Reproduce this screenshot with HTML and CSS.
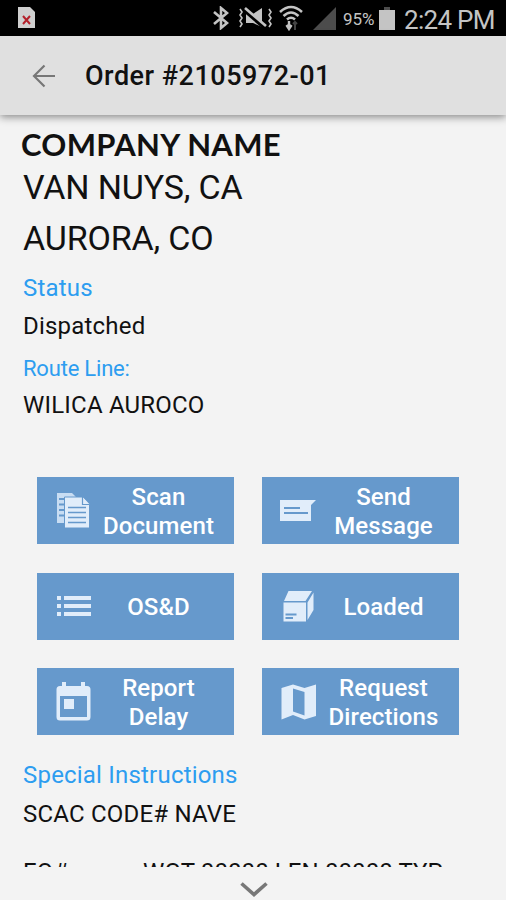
FILE: index.html
```
<!DOCTYPE html>
<html lang="en">

<head>
  <meta charset="UTF-8">
  <meta name="viewport" content="width=device-width, initial-scale=1.0">
  <title>Order #2105972-01</title>
  <link rel="stylesheet" href="styles.css">
</head>

<body>
  <div class="statusbar">
    <svg class="sim" width="18" height="22" viewBox="0 0 18 22">
      <path d="M0 0h12l5 5v16H0z" fill="#cfcfcf" />
      <path d="M5 9l7 8M12 9l-7 8" stroke="#b3202a" stroke-width="2" />
    </svg>
    <svg width="16" height="24" viewBox="0 0 16 24" fill="none" stroke="#c4c4c4" stroke-width="2.6">
      <path d="M1 6l13 11-6 5V2l6 5L1 18" />
    </svg>
    <svg class="mute" width="34" height="22" viewBox="0 0 34 22">
      <path d="M8 7h7l9-6v19l-9-4H8z" fill="#c4c4c4" />
      <path d="M5 2L27 21" stroke="#000" stroke-width="4" />
      <path d="M7 1L28 19" stroke="#c4c4c4" stroke-width="2.6" />
      <path d="M2 2l2 3-2 3 2 3-2 3 2 3-2 3M31 2l2 3-2 3 2 3-2 3 2 3-2 3" fill="none" stroke="#c4c4c4" stroke-width="1.6" />
    </svg>
    <svg class="wifi" width="24" height="26" viewBox="0 0 24 26" fill="none" stroke="#c4c4c4" stroke-width="2.6">
      <path d="M1 7Q12-3 23 7M4.500 11Q12 4 19.500 11M8 14.500Q12 11 16 14.500" />
      <path d="M10 16v8M7.500 20l2.500 4 2.500-4" stroke-width="2.400" />
      <path d="M16 25v-8M14 19l2-2 2 2" stroke="#444" stroke-width="2" />
    </svg>
    <svg class="signal" width="23" height="23" viewBox="0 0 23 23">
      <path d="M23 0v23H0z" fill="#4c4c4c" />
    </svg>
    <span class="percent">95%</span>
    <svg class="battery" width="16" height="23" viewBox="0 0 16 23">
      <path d="M5 0h6v4H5z" fill="#4c4c4c" />
      <path d="M0 3h16v20H0z" fill="#c4c4c4" />
    </svg>
    <span class="time">2:24 PM</span>
  </div>

  <header class="toolbar">
    <svg class="back" width="24" height="24" viewBox="0 0 24 24" fill="none" stroke="#777" stroke-width="2.2">
      <path d="M23 12H2M12.500 1.500L2 12l10.500 10.500" />
    </svg>
    <h1>Order #2105972-01</h1>
  </header>

  <main class="order">
    <p class="company">COMPANY NAME</p>
    <p class="place from">VAN NUYS, CA</p>
    <p class="place to">AURORA, CO</p>
    <p class="label status">Status</p>
    <p class="value">Dispatched</p>
    <p class="label route">Route Line:</p>
    <p class="value line">WILICA AUROCO</p>

    <div class="actions">
      <button type="button">
        <svg width="36" height="38" viewBox="0 0 36 38">
          <path d="M2 1h15l6 6v24H2z" fill="#c8ddf3" />
          <path d="M4 7h6M4 12.500h6M4 18h6M4 23.500h6" stroke="#6699cc" stroke-width="1.800" />
          <path d="M9.500 5H28l6.500 7v24h-25z" fill="#e1edfa" stroke="#6699cc" stroke-width="1" />
          <path d="M27.500 5v7.500h7" fill="#e1edfa" stroke="#6699cc" stroke-width="1.200" />
          <path d="M13 15.500h18M13 20.500h18M13 25.500h18M13 30.500h18" stroke="#6699cc" stroke-width="1.600" />
        </svg>
        <span>Scan<br>Document</span>
      </button>
      <button type="button">
        <svg width="36" height="38" viewBox="0 0 36 38">
          <path d="M0 8h36l-5 5v16H0z" fill="#e1edfa" />
          <path d="M4 16h16M4 21h24" stroke="#6699cc" stroke-width="2.200" />
        </svg>
        <span>Send<br>Message</span>
      </button>
      <button type="button">
        <svg width="36" height="38" viewBox="0 0 36 38" fill="#e1edfa">
          <path d="M2 9h4v4H2zM2 17h4v4H2zM2 25h4v4H2zM9 9h27v4H9zM9 17h27v4H9zM9 25h27v4H9z" />
        </svg>
        <span>OS&amp;D</span>
      </button>
      <button type="button">
        <svg width="36" height="38" viewBox="0 0 36 38" fill="#e1edfa">
          <path d="M8.500 4H32l-6.500 10H4zM33.500 5.500V23l-6 10V15.500zM3.500 15.500h22.500V34.500H3.500z" />
          <path d="M5.500 27.500h11M5.500 31h7.500" stroke="#6699cc" stroke-width="1.800" />
        </svg>
        <span>Loaded</span>
      </button>
      <button type="button">
        <svg width="36" height="40" viewBox="0 0 36 40" fill="#e1edfa">
          <path d="M7 0h4v4h15V0h4v4h2q3.500 0 3.500 3.500V35q0 3.500-3.500 3.500H5Q1.500 38.500 1.500 35V7.500Q1.500 4 5 4h2zM5 14v21h27V14z" fill-rule="evenodd" />
          <path d="M9 17h10v10H9z" />
        </svg>
        <span>Report<br>Delay</span>
      </button>
      <button type="button">
        <svg width="36" height="38" viewBox="0 0 36 38" fill="#e1edfa">
          <path d="M1.500 5L13 1.500 24.500 5 36 1.500V33l-11.500 3.500L13 32 1.500 36.500zM13 5.500v23l11.500 4V9z" fill-rule="evenodd" />
        </svg>
        <span>Request<br>Directions</span>
      </button>
    </div>

    <p class="label special">Special Instructions</p>
    <p class="value scac">SCAC CODE# NAVE</p>
    <p class="value cargo"><span class="eq">EQ#</span><span class="load">WGT 00000 LEN 00000 TYP</span></p>
  </main>

  <footer class="more">
    <svg width="28" height="16" viewBox="0 0 28 16" fill="none" stroke="#777" stroke-width="3.600">
      <path d="M1.500 1.500L14 12.500 26.500 1.500" />
    </svg>
  </footer>
</body>

</html>
```
FILE: styles.css
```
* {
  box-sizing: border-box;
}

body {
  display: flex;
  flex-direction: column;
  height: 900px;
  margin: 0;
  overflow: hidden;
  background-color: #f3f3f3;
  color: #111;
  font-family: Roboto, "Liberation Sans", sans-serif;
}

h1,
p {
  margin: 0;
  white-space: nowrap;
}

svg {
  display: block;
  flex-shrink: 0;
}

/* phone status bar */
.statusbar {
  display: flex;
  align-items: center;
  flex-shrink: 0;
  height: 36px;
  padding-left: 18px;
  background-color: #000;
  color: #c4c4c4;
}

.sim {
  margin-right: 177px;
}

.mute {
  margin-left: 9px;
}

.wifi {
  margin-left: 7px;
}

.signal {
  margin-left: 10px;
}

.percent {
  width: 36px;
  margin-left: 7px;
  padding-top: 2px;
  font-size: 17px;
}

.time {
  margin-left: 9px;
  padding-top: 3px;
  font-size: 26px;
  letter-spacing: -0.7px;
  line-height: 36px;
  white-space: nowrap;
}

.toolbar {
  display: flex;
  align-items: center;
  flex-shrink: 0;
  height: 79px;
  padding-left: 32px;
  background-color: #e0e0e0;
  box-shadow: 0 2px 8px rgba(0, 0, 0, 0.45);
}

.toolbar h1 {
  margin-left: 29px;
  font-size: 27px;
  font-weight: 500;
  letter-spacing: 0.5px;
}

/* order details */
.order {
  height: 752px;
  padding: 7px 0 0 23px;
  overflow: hidden;
  flex-shrink: 0;
}

.company {
  margin-left: -2px;
  font-family: Lato, sans-serif;
  font-size: 31px;
  font-weight: 700;
  letter-spacing: 0.3px;
  line-height: 44px;
}

.place {
  font-size: 34px;
  letter-spacing: -0.15px;
  line-height: 43px;
}

.to {
  line-height: 59px;
}

.label {
  color: #2d9df0;
  font-size: 24px;
  letter-spacing: 0.2px;
  line-height: 40px;
}

.value {
  font-size: 24px;
  letter-spacing: 0.2px;
  line-height: 37px;
}

.route {
  padding-top: 1px;
  font-size: 22px;
  letter-spacing: -0.2px;
  line-height: 46px;
}

.line {
  line-height: 27px;
}

.actions {
  display: grid;
  grid-template-columns: 197px 197px;
  grid-auto-rows: 67px;
  gap: 28.5px 28px;
  margin: 58px 0 20px 14px;
}

.actions button {
  display: flex;
  align-items: center;
  padding: 0 0 0 18px;
  border: none;
  background-color: #6699cc;
  color: #fff;
  font-family: inherit;
  font-size: 24px;
  font-weight: 500;
  letter-spacing: 0.1px;
  line-height: 29px;
}

.actions span {
  width: 135px;
  text-align: center;
  padding-top: 2px;
  white-space: nowrap;
}

.scac {
  line-height: 38px;
}

.cargo {
  display: flex;
  padding-top: 21px;
  letter-spacing: 0.1px;
}

.eq {
  width: 120px;
}

/* scroll hint */
.more {
  display: flex;
  justify-content: center;
  padding: 15px 0 0 2px;
}
```
